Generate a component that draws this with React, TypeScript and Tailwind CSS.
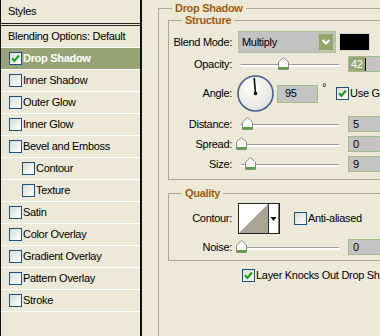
import React from "react";

type StyleRow = { name: string; on?: boolean; active?: boolean; sub?: boolean };

const rows: StyleRow[] = [
  { name: "Drop Shadow", on: true, active: true },
  { name: "Inner Shadow" },
  { name: "Outer Glow" },
  { name: "Inner Glow" },
  { name: "Bevel and Emboss" },
  { name: "Contour", sub: true },
  { name: "Texture", sub: true },
  { name: "Satin" },
  { name: "Color Overlay" },
  { name: "Gradient Overlay" },
  { name: "Pattern Overlay" },
  { name: "Stroke" },
];

function Check({ on, className = "" }: { on?: boolean; className?: string }) {
  return (
    <span
      className={`flex h-[13px] w-[13px] shrink-0 items-center justify-center border border-[#1c5180] bg-linear-to-br from-[#dcdcd5] to-white ${className}`}
    >
      {on && (
        <svg width="11" height="11" viewBox="0 0 11 11">
          <path d="M2 5.3 L4.4 7.8 L9 2.6" fill="none" stroke="#21a121" strokeWidth="2.2" />
        </svg>
      )}
    </span>
  );
}

function Label({ children }: { children: React.ReactNode }) {
  return <span className="w-[63px] shrink-0 text-right">{children}</span>;
}

function Slider({ thumb }: { thumb: string }) {
  return (
    <div className="relative ml-[6px] h-[16px] w-[104px] shrink-0">
      <div className="absolute top-[8px] right-[2px] left-[2px] h-[3px] rounded-full border-t border-[#9d9d9d] bg-white" />
      <svg className={`absolute top-[1px] ${thumb}`} width="11" height="13" viewBox="0 0 11 13">
        <path d="M0.5 5 L5.5 0.5 L10.5 5 V12.5 H0.5 Z" fill="#fbfbf8" stroke="#8c8c8c" />
        <rect x="1" y="10" width="9" height="2" fill="#52a834" />
      </svg>
    </div>
  );
}

function Field({ children }: { children: React.ReactNode }) {
  return (
    <div className="ml-[6px] flex h-[16px] w-[44px] shrink-0 items-center border border-[#a8ba8a] bg-[#c4c4c4] pl-[4px]">
      {children}
    </div>
  );
}

function Group({ title, className, children }: { title: string; className: string; children: React.ReactNode }) {
  return (
    <fieldset className={`shrink-0 border border-[#aca899] ${className}`}>
      <legend className="ml-[13px] px-[3px] text-[11px] leading-[12px] font-bold text-[#a35c0e]">{title}</legend>
      {children}
    </fieldset>
  );
}

export default function App() {
  return (
    <div className="flex h-[336px] w-[380px] overflow-hidden bg-[#ece9d8] font-['Liberation_Sans',Arial,sans-serif] text-[11px] tracking-[-0.3px] text-black">
      {/* styles list */}
      <div className="flex h-full w-[142px] shrink-0 flex-col border-r-2 border-l border-[#111]">
        <div className="flex h-[24px] shrink-0 items-center border-b border-[#222] pl-[7px]">Styles</div>
        <div className="h-[1px] shrink-0" />
        <div className="h-[1px] shrink-0 bg-[#222]" />
        <div className="flex h-[22px] shrink-0 items-center border-b border-white pl-[7px]">Blending Options: Default</div>
        {rows.map((s) => (
          <div
            key={s.name}
            className={`flex h-[22px] shrink-0 items-center gap-[1px] border-b border-white ${s.sub ? "pl-[21px]" : "pl-[8px]"} ${
              s.active ? "bg-[#98a377] font-bold text-white" : ""
            }`}
          >
            <Check on={s.on} />
            <span className="whitespace-nowrap">{s.name}</span>
          </div>
        ))}
      </div>

      {/* settings */}
      <div className="flex-1 pl-[16px]">
        <Group title="Drop Shadow" className="mt-[2px] h-[400px] w-[260px]">
          <Group title="Structure" className="ml-[9px] w-[240px] pb-[7px]">
            <div className="mt-[5px] flex h-[22px] items-center">
              <Label>Blend Mode:</Label>
              <div className="ml-[6px] flex h-[22px] w-[98px] shrink-0 items-center border border-[#b0c29a] bg-[#c2c2c2]">
                <span className="flex-1 pl-[3px]">Multiply</span>
                <span className="mr-[1px] flex h-[18px] w-[16px] items-center justify-center border border-[#b9c7a3] bg-[#95a36f]">
                  <svg width="10" height="8" viewBox="0 0 10 8">
                    <path d="M1.5 2 L5 5.5 L8.5 2" fill="none" stroke="#fff" strokeWidth="2" />
                  </svg>
                </span>
              </div>
              <div className="ml-[3px] h-[18px] w-[31px] shrink-0 border border-[#d6d6d0] bg-black" />
            </div>

            <div className="mt-[3px] flex h-[16px] items-center">
              <Label>Opacity:</Label>
              <Slider thumb="left-[40px]" />
              <div className="ml-[6px] flex h-[16px] w-[44px] shrink-0 items-center border border-[#a8ba8a] bg-[#c4c4c4]">
                <span className="bg-[#97a676] px-[2px] leading-[14px] text-white">42</span>
                <span className="h-[13px] w-[1px] bg-black" />
              </div>
            </div>

            <div className="mt-[3px] flex h-[37px] items-center">
              <Label>Angle:</Label>
              <svg className="ml-[5px] shrink-0" width="37" height="37" viewBox="0 0 37 37">
                <defs>
                  <radialGradient id="dial" cx="40%" cy="35%" r="70%">
                    <stop offset="0" stopColor="#ffffff" />
                    <stop offset="1" stopColor="#e2e1dc" />
                  </radialGradient>
                </defs>
                <circle cx="18.5" cy="18.5" r="17.5" fill="url(#dial)" stroke="#4a6190" strokeWidth="1.6" />
                <line x1="18.5" y1="18.5" x2="17.2" y2="3" stroke="#111" strokeWidth="1.6" />
                <circle cx="18.5" cy="18.5" r="1.8" fill="#000" />
              </svg>
              <div className="ml-[3px] flex h-[18px] w-[41px] shrink-0 items-center border border-[#a8ba8a] bg-[#c4c4c4] pl-[7px]">95</div>
              <span className="ml-[4px] self-start pt-[6px] leading-[13px]">°</span>
              <Check className="ml-[10px]" on />
              <span className="ml-[1px] whitespace-nowrap">Use Global Light</span>
            </div>

            <div className="mt-[4px] flex h-[16px] items-center">
              <Label>Distance:</Label>
              <Slider thumb="left-[4px]" />
              <Field>5</Field>
            </div>
            <div className="mt-[4px] flex h-[16px] items-center">
              <Label>Spread:</Label>
              <Slider thumb="left-[-2px]" />
              <Field>0</Field>
            </div>
            <div className="mt-[4px] flex h-[16px] items-center">
              <Label>Size:</Label>
              <Slider thumb="left-[7px]" />
              <Field>9</Field>
            </div>
          </Group>

          <Group title="Quality" className="mt-[7px] ml-[9px] w-[240px] pb-[5px]">
            <div className="mt-[4px] flex h-[31px] items-center">
              <Label>Contour:</Label>
              <svg className="ml-[6px] shrink-0" width="42" height="31" viewBox="0 0 42 31">
                <rect x="0.5" y="0.5" width="41" height="30" fill="#fff" stroke="#222" />
                <path d="M1 30 L30 1 V30 Z" fill="#aaa696" />
                <line x1="30.5" y1="1" x2="30.5" y2="30" stroke="#333" />
                <line x1="40.5" y1="1" x2="40.5" y2="30" stroke="#777" />
                <path d="M32.5 14 L38.5 14 L35.5 18 Z" fill="#000" />
              </svg>
              <Check className="ml-[14px]" />
              <span className="ml-[1px] whitespace-nowrap">Anti-aliased</span>
            </div>
            <div className="mt-[5px] flex h-[16px] items-center">
              <Label>Noise:</Label>
              <Slider thumb="left-[-2px]" />
              <Field>0</Field>
            </div>
          </Group>

          <div className="mt-[6px] ml-[83px] flex items-center">
            <Check on />
            <span className="ml-[1px] whitespace-nowrap">Layer Knocks Out Drop Shadow</span>
          </div>
        </Group>
      </div>
    </div>
  );
}
